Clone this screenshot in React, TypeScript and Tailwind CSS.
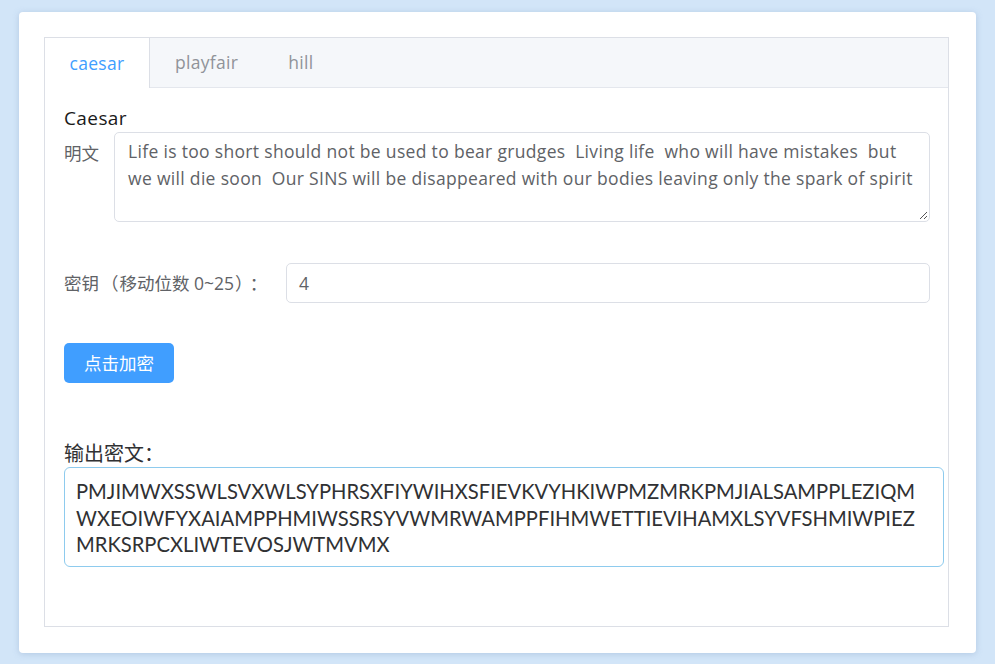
import React from "react";

const FONT = { fontFamily: '"Open Sans", "Noto Sans CJK SC", sans-serif' };
const OUT = { fontFamily: 'Lato, "Noto Sans CJK SC", sans-serif' };

export default function App() {
  return (
    <div
      className="w-[995px] h-[664px] bg-[#d2e5f8] pt-[12px] px-[19px] overflow-hidden"
      style={FONT}
    >
      <div className="h-[641px] bg-white rounded-[4px] shadow-[0_1px_6px_rgba(120,150,190,0.35)] pt-[25px] px-[25px]">
        <div className="w-[905px] h-[590px] border border-[#dcdfe6] flex flex-col">
          {/* tab header */}
          <div className="h-[50px] bg-[#f5f7fa] border-b border-[#e4e7ed] flex text-[17.5px] tracking-[0.3px]">
            <div className="h-[50px] bg-white border-r border-[#dcdfe6] flex items-center text-[#409eff] w-[105px] justify-center">
              caesar
            </div>
            <div className="px-[25px] flex items-center text-[#909399]">playfair</div>
            <div className="px-[25px] flex items-center text-[#909399]">hill</div>
          </div>
          {/* content */}
          <div className="pl-[19px] pr-[18px] pt-[17px]">
            <div className="text-[19px] leading-[26px] tracking-[0.4px] text-[#1a1a1a]">Caesar</div>
            <div className="flex mt-[1px]">
              <div className="w-[50px] text-[17.5px] text-[#606266] pt-[8px]">明文</div>
              <div className="relative flex-1 h-[90px] border border-[#dcdfe6] rounded-[5px] pl-[13px] pt-[5px] text-[17.5px] leading-[27px] tracking-[0.32px] text-[#606266]">
                <div className="whitespace-pre">Life is too short should not be used to bear grudges  Living life  who will have mistakes  but</div>
                <div className="whitespace-pre">we will die soon  Our SINS will be disappeared with our bodies leaving only the spark of spirit</div>
                <svg className="absolute right-[1px] bottom-[1px]" width="9" height="9" viewBox="0 0 9 9">
                  <path d="M8 1 L1 8 M8 5 L5 8" stroke="#555" strokeWidth="1" />
                </svg>
              </div>
            </div>
            <div className="flex items-center mt-[41px]">
              <div className="w-[222px] text-[17.5px] text-[#606266] whitespace-nowrap">
                密钥<span className="ml-[2px] mr-[1px]">（</span>移动位数 0~25<span className="ml-[1px] mr-[6px]">）</span>：
              </div>
              <div className="flex-1 h-[40px] border border-[#dcdfe6] rounded-[5px] pl-[12px] flex items-center text-[17.5px] text-[#606266]">
                4
              </div>
            </div>
            <button className="mt-[40px] w-[110px] h-[40px] bg-[#409eff] rounded-[5px] text-white text-[17.5px] flex items-center justify-center">
              点击加密
            </button>
            <div className="mt-[58px] text-[20px] leading-[26px] text-[#303133]">输出密文：</div>
            <div
              className="w-[880px] h-[100px] border border-[#8ecbee] rounded-[6px] pl-[11px] pt-[10px] text-[20.2px] leading-[26.5px] text-[#303133]"
              style={OUT}
            >
              <div className="whitespace-nowrap">PMJIMWXSSWLSVXWLSYPHRSXFIYWIHXSFIEVKVYHKIWPMZMRKPMJIALSAMPPLEZIQM</div>
              <div className="whitespace-nowrap">WXEOIWFYXAIAMPPHMIWSSRSYVWMRWAMPPFIHMWETTIEVIHAMXLSYVFSHMIWPIEZ</div>
              <div className="whitespace-nowrap">MRKSRPCXLIWTEVOSJWTMVMX</div>
            </div>
          </div>
        </div>
      </div>
    </div>
  );
}
